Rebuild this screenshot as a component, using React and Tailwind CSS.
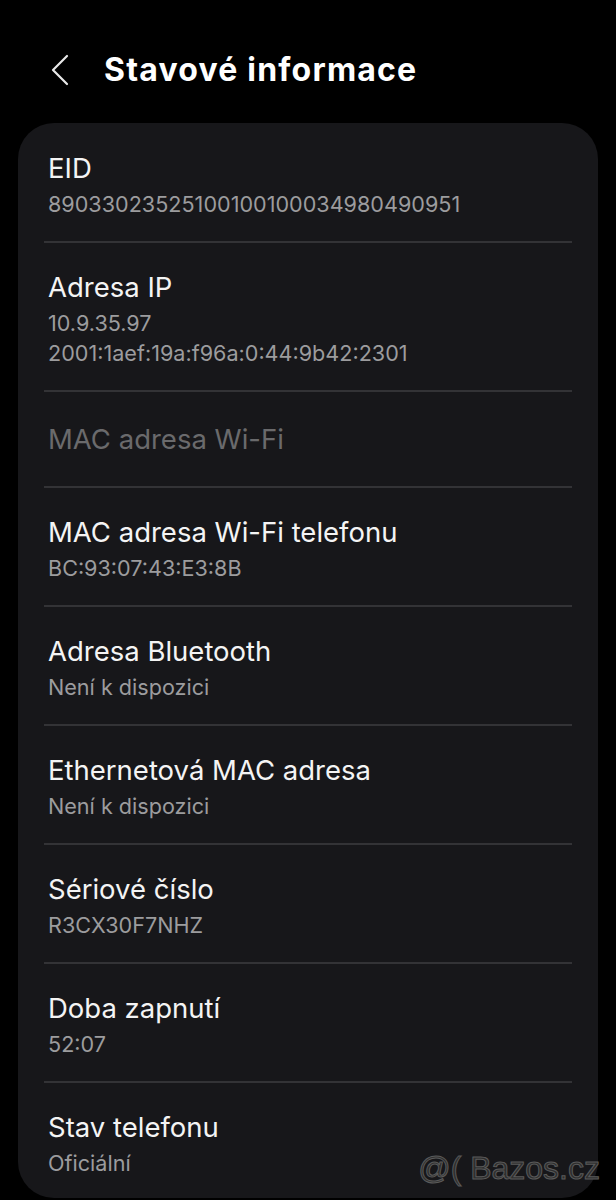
import * as React from 'react';

const ROWS = [
  { title: 'EID', lines: ['89033023525100100100034980490951'] },
  { title: 'Adresa IP', lines: ['10.9.35.97', '2001:1aef:19a:f96a:0:44:9b42:2301'] },
  { title: 'MAC adresa Wi-Fi', lines: [], disabled: true },
  { title: 'MAC adresa Wi-Fi telefonu', lines: ['BC:93:07:43:E3:8B'] },
  { title: 'Adresa Bluetooth', lines: ['Není k dispozici'] },
  { title: 'Ethernetová MAC adresa', lines: ['Není k dispozici'] },
  { title: 'Sériové číslo', lines: ['R3CX30F7NHZ'] },
  { title: 'Doba zapnutí', lines: ['52:07'] },
  { title: 'Stav telefonu', lines: ['Oficiální'] },
]

function Row({ row }) {
  if (row.disabled) {
    return (
      <div className="flex h-[94px] items-center pl-[30px]">
        <div className="text-[27.5px] leading-[34px] text-[#6a6a6c]">{row.title}</div>
      </div>
    )
  }
  return (
    <div className="pl-[30px] pt-[27px] pb-[22px]">
      <div className="text-[27.5px] leading-[34px] text-[#f4f4f4]">{row.title}</div>
      <div className="mt-[4px]">
        {row.lines.map(l => (
          <div key={l} className="text-[21.6px] leading-[30px] text-[#9c9c9e]">{l}</div>
        ))}
      </div>
    </div>
  )
}

export default function App() {
  return (
    <div className="relative h-[1200px] w-[616px] overflow-hidden bg-black font-['Inter',sans-serif]">
      {/* header */}
      <div className="flex h-[123px] items-center pt-[17px]">
        <svg className="ml-[51px] h-[32px] w-[18px]" viewBox="0 0 18 32" fill="none">
          <path d="M16 2 L2 16 L16 30" stroke="#e8e8e8" strokeWidth="2.2" strokeLinecap="round" strokeLinejoin="round" />
        </svg>
        <div className="ml-[35px] text-[32px] font-bold tracking-[1.2px] text-white">Stavové informace</div>
      </div>

      {/* card */}
      <div className="mx-[18px] h-[1075px] overflow-hidden rounded-[36px] bg-[#17171a] pt-[1px]">
        {ROWS.map((r, i) => (
          <div key={r.title}>
            <Row row={r} />
            {i < ROWS.length - 1 && <div className="mx-[26px] h-[2px] bg-[#333336]" />}
          </div>
        ))}
      </div>

      {/* watermark */}
      <div className="absolute right-[16px] top-[1148px] whitespace-nowrap font-['Liberation_Sans',sans-serif] text-[32px] leading-[40px] text-[#2e2e2e] [-webkit-text-stroke:1px_#5a5a5a]">
        @( Bazos.cz
      </div>
    </div>
  )
}
